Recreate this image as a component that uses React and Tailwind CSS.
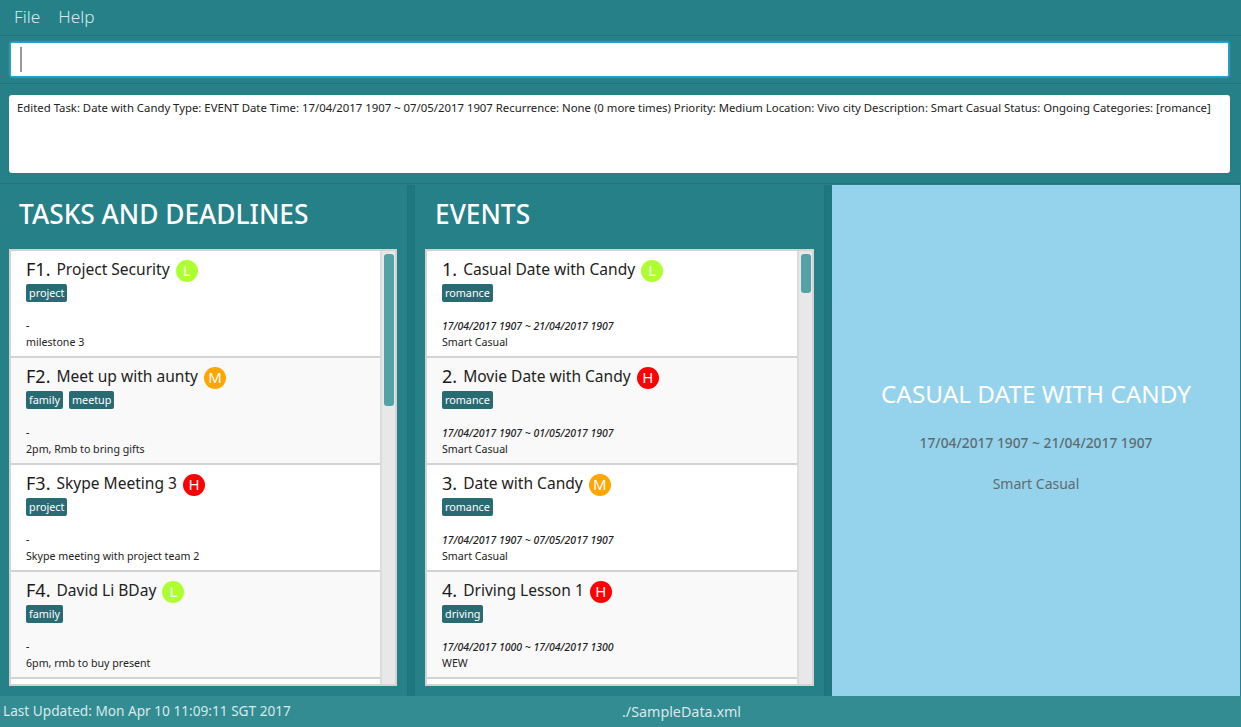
import React from 'react';

const TASKS = [
  { id: 'F1.', name: 'Project Security', level: 'L', tags: ['project'], date: '-', note: 'milestone 3' },
  { id: 'F2.', name: 'Meet up with aunty', level: 'M', tags: ['family', 'meetup'], date: '-', note: '2pm, Rmb to bring gifts' },
  { id: 'F3.', name: 'Skype Meeting 3', level: 'H', tags: ['project'], date: '-', note: 'Skype meeting with project team 2' },
  { id: 'F4.', name: 'David Li BDay', level: 'L', tags: ['family'], date: '-', note: '6pm, rmb to buy present' },
];

const EVENTS = [
  { id: '1.', name: 'Casual Date with Candy', level: 'L', tags: ['romance'], date: '17/04/2017 1907 ~ 21/04/2017 1907', note: 'Smart Casual' },
  { id: '2.', name: 'Movie Date with Candy', level: 'H', tags: ['romance'], date: '17/04/2017 1907 ~ 01/05/2017 1907', note: 'Smart Casual' },
  { id: '3.', name: 'Date with Candy', level: 'M', tags: ['romance'], date: '17/04/2017 1907 ~ 07/05/2017 1907', note: 'Smart Casual' },
  { id: '4.', name: 'Driving Lesson 1', level: 'H', tags: ['driving'], date: '17/04/2017 1000 ~ 17/04/2017 1300', note: 'WEW' },
];

const LEVEL_COLORS = {
  L: 'bg-[#adff2f]',
  M: 'bg-[#ffa500]',
  H: 'bg-[#ff0000]',
};

function Card({ item, index }) {
  return (
    <div className={`h-[107px] shrink-0 border-b-2 border-[#d3d3d3] pl-[15px] ${index % 2 ? 'bg-[#f9f9f9]' : 'bg-white'}`}>
      <div className="flex h-[31px] items-center pt-[8px]">
        <span className="mb-[3px] mr-[6px] text-[18px] leading-none text-[#1a1a1a]">{item.id}</span>
        <span className="mb-[2px] text-[15.55px] leading-none text-[#222]">{item.name}</span>
        <span className={`ml-[6px] flex h-[22px] w-[22px] items-center justify-center rounded-full text-[15px] leading-none text-white ${LEVEL_COLORS[item.level]}`}>
          {item.level}
        </span>
      </div>
      <div className="mt-[2px] flex h-[18px] gap-[6px]">
        {item.tags.map((t) => (
          <span key={t} className="flex h-[18px] items-center rounded-[2px] bg-[#296b73] px-[3px] text-[10.8px] text-white">
            {t}
          </span>
        ))}
      </div>
      <div className="mt-[16px] h-[16px] text-[10.5px] font-medium italic leading-[16px] text-[#222]">{item.date}</div>
      <div className="text-[10.65px] leading-[16px] text-[#222]">{item.note}</div>
    </div>
  );
}

function ListPanel({ title, items, thumbHeight, listWidth, cardWidth, className }) {
  return (
    <div className={`flex h-full flex-col ${className}`}>
      <div className="flex h-[64px] items-center pb-[5px] pl-[10px] text-[26.3px] font-medium leading-none text-white">{title}</div>
      <div className="flex h-[437px] border-2 border-[#d3d3d3] bg-white" style={{ width: listWidth }}>
        <div className="flex flex-col overflow-hidden" style={{ width: cardWidth }}>
          {items.map((it, i) => (
            <Card key={it.id} item={it} index={i} />
          ))}
        </div>
        <div className="flex-1 border-l-2 border-[#dcdcdc] bg-[#e8e8e8] pl-[2px] pt-[3px]">
          <div className="w-[10px] rounded-[3px] bg-[#52a2a8]" style={{ height: thumbHeight }} />
        </div>
      </div>
    </div>
  );
}

export default function App() {
  return (
    <div className="flex h-[727px] w-[1241px] flex-col overflow-hidden bg-[#268088] text-[#222]" style={{ fontFamily: '"Noto Sans", "Open Sans", sans-serif' }}>
      <div className="flex h-[36px] shrink-0 items-center gap-[18px] border-b border-[#1f747c] pb-[1px] pl-[14px] text-[17.2px] font-light text-[#d8e8ea]">
        <span>File</span>
        <span>Help</span>
      </div>

      <div className="h-[48px] shrink-0 border-b border-[#1f747c] pl-[10px] pr-[12px] pt-[6px]">
        <div className="flex h-[35px] items-center rounded-[2px] border border-[#1ea5d8] bg-white pl-[9px] shadow-[0_0_2px_#5fd0f0]">
          <div className="h-[25px] w-[2px] bg-[#999]" />
        </div>
      </div>

      <div className="h-[100px] shrink-0 border-b border-[#1f747c] pl-[9px] pr-[11px] pt-[11px]">
        <div className="h-[78px] whitespace-nowrap rounded-[3px] bg-white pl-[8px] pt-[4px] text-[11.35px] leading-[18px] text-[#222]">
          Edited Task: Date with Candy Type: EVENT Date Time: 17/04/2017 1907 ~ 07/05/2017 1907 Recurrence: None (0 more times) Priority: Medium Location: Vivo city Description: Smart Casual Status: Ongoing Categories: [romance]
        </div>
      </div>

      <div className="flex h-[512px] shrink-0 pt-[1px]">
        <ListPanel title="TASKS AND DEADLINES" items={TASKS} thumbHeight={152} listWidth={388} cardWidth={369} className="w-[407px] pl-[9px]" />
        <div className="w-[8px] shrink-0 border-x border-[#1f747c] bg-[#1d777e]" />
        <ListPanel title="EVENTS" items={EVENTS} thumbHeight={39} listWidth={389} cardWidth={370} className="w-[409px] pl-[10px]" />
        <div className="w-[8px] shrink-0 border-l border-[#1f747c] bg-[#1d777e]" />
        <div className="flex w-[408px] flex-col items-center bg-[#95d3ec] pt-[192px]">
          <div className="text-[24.3px] leading-[34px] text-white">CASUAL DATE WITH CANDY</div>
          <div className="mt-[21px] text-[13.8px] font-medium leading-[22px] text-[#5f6b70]">17/04/2017 1907 ~ 21/04/2017 1907</div>
          <div className="mt-[19px] text-[14px] leading-[22px] text-[#5f6b70]">Smart Casual</div>
        </div>
      </div>

      <div className="flex h-[31px] shrink-0 items-center bg-[#328c92] text-[#d8e9ea]">
        <div className="w-[622px] pl-[3px] text-[13.65px]">Last Updated: Mon Apr 10 11:09:11 SGT 2017</div>
        <div className="text-[14.3px]">./SampleData.xml</div>
      </div>
    </div>
  );
}
